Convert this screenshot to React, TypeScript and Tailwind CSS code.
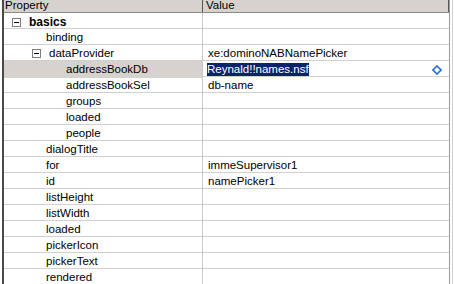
import React from 'react';

interface Row {
  name: string;
  value?: string;
  level: number;
  expander?: boolean;
  bold?: boolean;
  selected?: boolean;
}

const rows: Row[] = [
  { name: 'basics', level: 0, expander: true, bold: true },
  { name: 'binding', level: 1 },
  { name: 'dataProvider', level: 1, expander: true, value: 'xe:dominoNABNamePicker' },
  { name: 'addressBookDb', level: 2, value: 'Reynald!!names.nsf', selected: true },
  { name: 'addressBookSel', level: 2, value: 'db-name' },
  { name: 'groups', level: 2 },
  { name: 'loaded', level: 2 },
  { name: 'people', level: 2 },
  { name: 'dialogTitle', level: 1 },
  { name: 'for', level: 1, value: 'immeSupervisor1' },
  { name: 'id', level: 1, value: 'namePicker1' },
  { name: 'listHeight', level: 1 },
  { name: 'listWidth', level: 1 },
  { name: 'loaded', level: 1 },
  { name: 'pickerIcon', level: 1 },
  { name: 'pickerText', level: 1 },
  { name: 'rendered', level: 1 },
];

const Minus = () => (
  <div className="w-[9px] h-[9px] border border-[#7f7f7f] bg-white flex items-center justify-center shrink-0">
    <div className="w-[5px] h-[1px] bg-black" />
  </div>
);

const Diamond = () => (
  <svg width="10" height="10" viewBox="0 0 10 10" className="shrink-0">
    <path d="M5 1 L9 5 L5 9 L1 5 Z" fill="white" stroke="#1f6fd6" strokeWidth="1.6" />
  </svg>
);

export default function App() {
  return (
    <div
      className="w-[454px] h-[284px] overflow-hidden bg-white flex text-[11.5px] text-black"
      style={{ fontFamily: '"Liberation Sans", Arial, sans-serif' }}
    >
      <div className="w-[2px] shrink-0" />
      <div className="w-[448px] shrink-0 border-l-2 border-r border-l-[#4a4a4a] border-r-[#9a9a9a] flex flex-col">
        <div className="h-[13px] shrink-0 bg-[#d6d3ce] border-b border-[#8a8a8a] grid grid-cols-[199px_1fr] leading-[11px]">
          <div className="pl-[1px] border-r border-[#5a5a5a] overflow-hidden">Property</div>
          <div className="pl-[3px] border-r border-[#5a5a5a] overflow-hidden">Value</div>
        </div>
        {rows.map((r, i) => (
          <div key={i} className="h-[16px] shrink-0 grid grid-cols-[199px_1fr] border-b border-[#d0d0d0]">
            <div
              className={`border-r border-[#c8c8c8] flex items-center ${r.selected ? 'bg-[#d6d3ce]' : ''}`}
              style={{ paddingLeft: r.level === 0 ? 8 : r.level === 1 ? (r.expander ? 28 : 42) : 62 }}
            >
              {r.expander && <Minus />}
              <span className={`${r.expander ? 'ml-[8px]' : ''} ${r.bold ? 'font-bold text-[12px]' : ''}`}>
                {r.name}
              </span>
            </div>
            <div className="flex items-center pl-[4px] pr-[7px]">
              {r.selected ? (
                <>
                  <span className="bg-[#0a246a] text-white leading-[13px]">{r.value}</span>
                  <div className="flex-1" />
                  <Diamond />
                </>
              ) : (
                <span className="pl-[1px]">{r.value}</span>
              )}
            </div>
          </div>
        ))}
      </div>
      <div className="w-[2px] shrink-0" />
      <div className="w-[1px] shrink-0 bg-[#d0d0d0]" />
    </div>
  );
}
